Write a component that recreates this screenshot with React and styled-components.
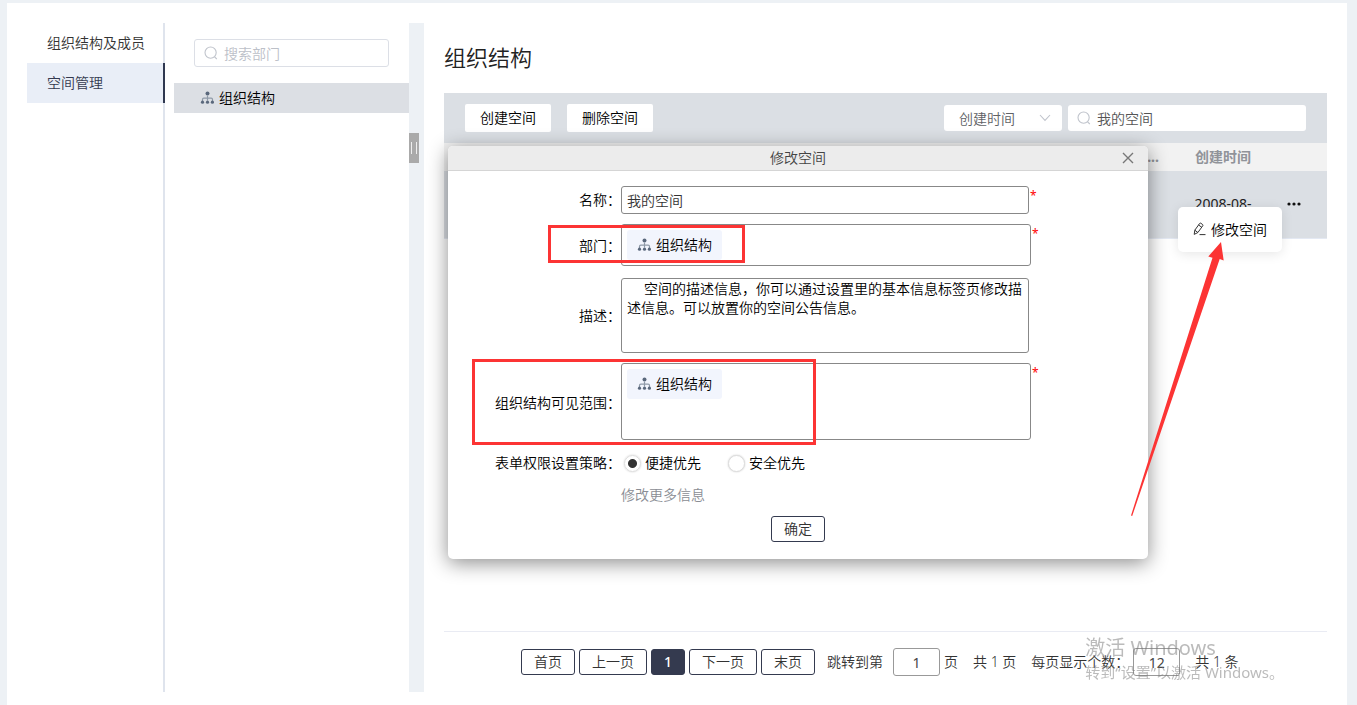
import styled, { createGlobalStyle } from "styled-components";

const GlobalStyle = createGlobalStyle`
  * {
    box-sizing: border-box;
  }

  body {
    margin: 0;
    background: #edf1f5;
    color: #333;
    font-size: 14px;
    line-height: 20px;
  }

  body, button, input, select, textarea {
    font-family: "Noto Sans", "Noto Sans CJK SC", sans-serif;
    font-weight: 350;
  }

  a {
    color: inherit;
    text-decoration: none;
  }
`;

const SitemapIcon = () => (
  <svg width="14" height="14" viewBox="0 0 14 14" fill="#5a687c" aria-hidden="true">
    <circle cx="7.5" cy="2.6" r="2" />
    <path
      d="M7.5 4.5v5M2.500 10V8.500q0-1.300 1.300-1.300h7.400q1.300 0 1.300 1.300V10"
      fill="none"
      stroke="#8f9aa8"
      strokeWidth="1.2"
    />
    <circle cx="2.5" cy="11.2" r="1.6" />
    <circle cx="7.5" cy="11.2" r="1.6" />
    <circle cx="12.400" cy="11.2" r="1.6" />
  </svg>
);

const SearchIcon = () => (
  <svg width="14" height="14" viewBox="0 0 14 14" fill="none" stroke="#c0c4cc" aria-hidden="true">
    <circle cx="6.6" cy="6.6" r="5.6" strokeWidth="1.1" />
    <path d="M10.6 10.8l2.2 2.2" strokeWidth="1.1" />
  </svg>
);

const ChevronIcon = () => (
  <svg width="12" height="8" viewBox="0 0 12 8" fill="none" stroke="#c0c4cc" aria-hidden="true">
    <path d="M1 1l5 5.4L11 1" strokeWidth="1.1" />
  </svg>
);

const CloseIcon = () => (
  <svg width="12" height="12" viewBox="0 0 12 12" stroke="#777" aria-hidden="true">
    <path d="M1 1l10 10M11 1L1 11" strokeWidth="1.4" />
  </svg>
);

const PencilIcon = () => (
  <svg width="13" height="14" viewBox="0 0 13 14" fill="none" stroke="#333" aria-hidden="true">
    <path d="M1.2 12.4l.6-4.2L6.7 1.4q.5-.6 1.2-.1l1.7 1.2q.7.5.2 1.2L4.9 10.5zM5.6 3l3.2 2.3M1.8 8.2l3.1 2.3M6.5 12.6h6" />
  </svg>
);

const MoreIcon = () => (
  <svg width="14" height="4" viewBox="0 0 14 4" fill="#111" aria-hidden="true">
    <circle cx="2" cy="2" r="1.6" />
    <circle cx="7" cy="2" r="1.6" />
    <circle cx="12" cy="2" r="1.6" />
  </svg>
);

const App = () => {
  return (
    <>
      <GlobalStyle />
      <Page>
        <Nav>
          <NavLink href="#members">组织结构及成员</NavLink>
          <NavLink href="#spaces" $active>
            空间管理
          </NavLink>
        </Nav>

        <Tree>
          <TreeSearch>
            <SearchIcon />
            <SearchInput type="text" aria-label="搜索部门" placeholder="搜索部门" />
          </TreeSearch>
          <TreeNode href="#root-dept">
            <SitemapIcon />
            组织结构
          </TreeNode>
        </Tree>
        <Splitter>
          <Handle />
        </Splitter>

        <Main>
          <Title>组织结构</Title>
          <Toolbar>
            <ToolButton type="button">创建空间</ToolButton>
            <ToolButton type="button">删除空间</ToolButton>
            <Filters>
              <SelectWrap>
                <Select aria-label="排序">
                  <option>创建时间</option>
                </Select>
                <ChevronIcon />
              </SelectWrap>
              <SpaceSearch>
                <SearchIcon />
                <SearchInput type="text" aria-label="搜索空间" defaultValue="我的空间" />
              </SpaceSearch>
            </Filters>
          </Toolbar>

          <Table>
            <thead>
              <tr>
                <Th $align="right">...</Th>
                <Th $width="128px">创建时间</Th>
                <Th $width="40px" />
              </tr>
            </thead>
            <tbody>
              <tr>
                <Td />
                <Td>2008-08-</Td>
                <Td>
                  <MoreButton type="button" aria-label="更多">
                    <MoreIcon />
                  </MoreButton>
                </Td>
              </tr>
            </tbody>
          </Table>

          <Pager>
            <Button type="button">首页</Button>
            <Button type="button">上一页</Button>
            <Button type="button" $current>
              1
            </Button>
            <Button type="button">下一页</Button>
            <Button type="button">末页</Button>
            <PagerInfo>
              <label htmlFor="jump">跳转到第</label>
              <PageInput id="jump" type="text" defaultValue="1" />
            </PagerInfo>
            <PagerText>页</PagerText>
            <PagerText $wide>共 1 页</PagerText>
            <PagerText as="label" htmlFor="size" $wide>
              每页显示个数：
            </PagerText>
            <PageInput id="size" type="text" defaultValue="12" />
            <PagerText $wide>共 1 条</PagerText>
          </Pager>

          <Popover type="button">
            <PencilIcon />
            修改空间
          </Popover>

          <Dialog role="dialog" aria-labelledby="dialog-title">
            <DialogHeader>
              <DialogTitle id="dialog-title">修改空间</DialogTitle>
              <CloseButton type="button" aria-label="关闭">
                <CloseIcon />
              </CloseButton>
            </DialogHeader>
            <Form>
              <Label htmlFor="name">名称：</Label>
              <Field>
                <TextInput id="name" type="text" defaultValue="我的空间" />
                <Required>*</Required>
              </Field>

              <Label as="span">部门：</Label>
              <Field>
                <TagBox $height="42px">
                  <Tag>
                    <SitemapIcon />
                    组织结构
                  </Tag>
                </TagBox>
                <Required>*</Required>
              </Field>

              <Label htmlFor="desc">描述：</Label>
              <Field>
                <TextArea
                  id="desc"
                  defaultValue="空间的描述信息，你可以通过设置里的基本信息标签页修改描述信息。可以放置你的空间公告信息。"
                />
              </Field>

              <Label as="span">组织结构可见范围：</Label>
              <Field>
                <TagBox $height="77px">
                  <Tag>
                    <SitemapIcon />
                    组织结构
                  </Tag>
                </TagBox>
                <Required>*</Required>
              </Field>

              <Label as="span">表单权限设置策略：</Label>
              <Radios>
                <RadioLabel>
                  <Radio type="radio" name="policy" defaultChecked />
                  便捷优先
                </RadioLabel>
                <RadioLabel>
                  <Radio type="radio" name="policy" />
                  安全优先
                </RadioLabel>
              </Radios>

              <MoreLink href="#more">修改更多信息</MoreLink>
            </Form>
            <DialogFooter>
              <Button type="submit">确定</Button>
            </DialogFooter>
            <Highlight $left="100px" $top="79px" $width="197px" $height="38px" />
            <Highlight $left="24px" $top="213px" $width="344px" $height="86px" />
          </Dialog>

          <Pointer viewBox="0 0 94 275" aria-hidden="true">
            <path d="M90 0l2.7 18.6-4-1.5L1.2 274 0 273.5 81.5 15.8l-4.2-1.3z" fill="#fc3434" />
          </Pointer>
        </Main>
      </Page>

      <Watermark>
        <WatermarkTitle>激活 Windows</WatermarkTitle>
        <WatermarkText>转到“设置”以激活 Windows。</WatermarkText>
      </Watermark>
    </>
  );
};

const Page = styled.div`
  display: flex;
  min-height: calc(100vh - 3px);
  margin: 3px 10px 0 7px;
  padding: 20px 20px 13px;
  background: #fff;
`;

const Nav = styled.nav`
  flex: 0 0 138px;
  min-width: 0;
  border-right: 2px solid #dfe4ed;
`;

const NavLink = styled.a`
  display: block;
  margin-right: -2px;
  padding-left: 20px;
  line-height: 40px;
  white-space: nowrap;
  color: ${(props) => (props.$active ? "#343a4f" : "#333")};
  background: ${(props) => (props.$active ? "#e9eef7" : "transparent")};
  border-right: 2px solid ${(props) => (props.$active ? "#2f3850" : "transparent")};
`;

const Tree = styled.aside`
  flex: 0 0 235px;
  min-width: 0;
  margin-left: 9px;
  padding-top: 16px;
`;

const SearchBox = styled.div`
  display: flex;
  align-items: center;
  gap: 6px;
  background: #fff;
  border-radius: 3px;
`;

const TreeSearch = styled(SearchBox)`
  height: 28px;
  margin: 0 20px 16px;
  padding: 0 9px;
  border: 1px solid #dcdfe6;
`;

const SearchInput = styled.input`
  flex: 1;
  min-width: 0;
  padding: 0;
  border: none;
  outline: 0;
  background: none;
  color: #555;
  font-size: 14px;

  &::placeholder {
    color: #bcc0c8;
  }
`;

const TreeNode = styled.a`
  display: flex;
  align-items: center;
  gap: 5px;
  height: 30px;
  padding-left: 26px;
  color: #000;
  background: #dcdfe4;
`;

const Splitter = styled.div`
  flex: 0 0 15px;
  padding-top: 110px;
  background: #edf1f5;
`;

const Handle = styled.div`
  display: flex;
  align-items: center;
  justify-content: center;
  width: 10px;
  height: 30px;
  background: #aaa;

  &::before {
    content: "";
    width: 4px;
    height: 12px;
    border: solid #eee;
    border-width: 0 1px;
  }
`;

const Main = styled.main`
  position: relative;
  display: flex;
  flex: 1;
  flex-direction: column;
  min-width: 0;
  margin-left: 20px;
`;

const Title = styled.h1`
  margin: 0;
  padding-bottom: 2px;
  color: #222;
  font-size: 22px;
  font-weight: 350;
  line-height: 68px;
`;

const Toolbar = styled.div`
  display: flex;
  align-items: center;
  gap: 16px;
  height: 50px;
  padding: 0 21px;
  background: #dbdfe4;
`;

const ToolButton = styled.button`
  height: 28px;
  padding: 0 15px 2px;
  border: none;
  border-radius: 2px;
  color: #000;
  background: #fff;
  font-size: 14px;
`;

const Filters = styled.div`
  display: flex;
  gap: 6px;
  margin-left: auto;
`;

const SelectWrap = styled.div`
  display: flex;
  align-items: center;
  width: 118px;
  height: 26px;
  padding: 0 11px 0 15px;
  border-radius: 3px;
  background: #fff;
`;

const Select = styled.select`
  flex: 1;
  padding: 0;
  appearance: none;
  border: none;
  outline: 0;
  color: #606266;
  background: none;
  font-size: 14px;
`;

const SpaceSearch = styled(SearchBox)`
  width: 238px;
  height: 26px;
  padding: 0 9px;
`;

const Table = styled.table`
  width: 100%;
  table-layout: fixed;
  border-collapse: collapse;
`;

const Th = styled.th`
  width: ${(props) => props.$width || "auto"};
  height: 28px;
  padding: 0;
  color: #909399;
  background: #f2f2f2;
  font-weight: 700;
  text-align: ${(props) => props.$align || "center"};
`;

const Td = styled.td`
  height: 67px;
  padding: 0;
  color: #222;
  background: #dbdfe4;
  border-bottom: 1px solid #e4e9f3;
  text-align: center;
  font-weight: 400;

  &:last-child {
    text-align: left;
  }
`;

const MoreButton = styled.button`
  display: flex;
  padding: 0;
  border: none;
  background: none;
`;

const Pager = styled.footer`
  display: flex;
  align-items: center;
  gap: 4px;
  height: 61px;
  margin-top: auto;
  padding-left: 77px;
  white-space: nowrap;
  border-top: 1px solid #e9ebf3;
`;

const Button = styled.button`
  height: 26px;
  padding: 0 12px 2px;
  border: 1px solid #343a4f;
  border-radius: 3px;
  color: ${(props) => (props.$current ? "#fff" : "#333")};
  background: ${(props) => (props.$current ? "#343a4f" : "#fff")};
  font-size: 14px;
  font-weight: ${(props) => (props.$current ? 500 : 350)};
`;

const PagerInfo = styled.span`
  display: flex;
  align-items: center;
  gap: 10px;
  margin-left: 8px;
`;

const PagerText = styled.span`
  margin-left: ${(props) => (props.$wide ? "11px" : "0")};
`;

const PageInput = styled.input`
  width: 47px;
  height: 28px;
  padding: 0;
  border: 1px solid #999;
  border-radius: 3px;
  outline: 0;
  color: #444;
  text-align: center;
  font-size: 14px;
  font-weight: 400;
`;

const Popover = styled.button`
  position: absolute;
  top: 184px;
  right: 45px;
  display: flex;
  align-items: center;
  gap: 5px;
  height: 45px;
  padding: 0 15px 2px;
  border: none;
  border-radius: 5px;
  color: #000;
  background: #fff;
  box-shadow: 0 2px 12px rgba(0, 0, 0, 0.1);
  font-size: 14px;
`;

const Dialog = styled.section`
  position: absolute;
  top: 123px;
  left: 4px;
  width: 700px;
  padding-bottom: 17px;
  border-radius: 5px;
  background: #fff;
  box-shadow: 0 4px 20px rgba(0, 0, 0, 0.45);
`;

const DialogHeader = styled.header`
  display: flex;
  align-items: center;
  height: 25px;
  padding: 0 14px 0 26px;
  border-bottom: 1px solid #d5d5d5;
  border-radius: 5px 5px 0 0;
  background: #ececec;
`;

const DialogTitle = styled.h2`
  flex: 1;
  margin: 0;
  color: #444;
  text-align: center;
  font-size: 14px;
  font-weight: 350;
`;

const CloseButton = styled.button`
  display: flex;
  padding: 0;
  border: none;
  background: none;
`;

const Form = styled.div`
  display: grid;
  grid-template-columns: 173px 1fr;
  row-gap: 10px;
  align-items: center;
  padding-top: 15px;
  color: #000;
`;

const Label = styled.label`
  text-align: right;
`;

const Field = styled.div`
  display: flex;
  align-items: flex-start;
  gap: 1px;
`;

const Required = styled.span`
  color: #f00;
  font-size: 12px;
  font-weight: 400;
`;

const TextInput = styled.input`
  width: 408px;
  height: 28px;
  padding: 0 5px;
  border: 1px solid #888;
  border-radius: 3px;
  outline: 0;
  color: #333;
  font-size: 14px;
`;

const TagBox = styled.div`
  width: 410px;
  height: ${(props) => props.$height};
  margin-bottom: 2px;
  padding: 5px;
  border: 1px solid #888;
  border-radius: 3px;
`;

const Tag = styled.span`
  display: inline-flex;
  align-items: center;
  gap: 5px;
  height: 30px;
  padding: 0 10px;
  border-radius: 3px;
  background: #f2f5fd;
`;

const TextArea = styled.textarea`
  width: 408px;
  height: 75px;
  padding: 0 5px;
  border: 1px solid #888;
  border-radius: 3px;
  outline: 0;
  resize: none;
  color: #000;
  font-size: 14px;
  line-height: 19px;
  text-indent: 17px;
`;

const Radios = styled.div`
  display: flex;
  gap: 27px;
  height: 22px;
  padding-left: 3px;
`;

const RadioLabel = styled.label`
  display: flex;
  align-items: center;
  gap: 4px;
`;

const Radio = styled.input`
  width: 17px;
  height: 17px;
  margin: 0;
  appearance: none;
  border: 1px solid #ddd;
  border-radius: 50%;
  background: #fff;
  box-shadow: 0 0 2px rgba(0, 0, 0, 0.2);

  &:checked {
    background: radial-gradient(circle, #333 4px, #fff 5px);
  }
`;

const MoreLink = styled.a`
  grid-column: 2;
  color: #8a8d94;
  line-height: 22px;
`;

const DialogFooter = styled.div`
  display: flex;
  justify-content: center;
  margin-top: 10px;
`;

const Highlight = styled.div`
  position: absolute;
  top: ${(props) => props.$top};
  left: ${(props) => props.$left};
  width: ${(props) => props.$width};
  height: ${(props) => props.$height};
  border: 3px solid #fc3434;
  pointer-events: none;
`;

const Pointer = styled.svg`
  position: absolute;
  top: 219px;
  right: 102px;
  width: 94px;
  height: 275px;
  pointer-events: none;
`;

const Watermark = styled.div`
  position: fixed;
  right: 73px;
  bottom: 21px;
  color: rgba(120, 120, 120, 0.5);
  font-weight: 400;
  pointer-events: none;
`;

const WatermarkTitle = styled.div`
  font-size: 20px;
  line-height: 24px;
`;

const WatermarkText = styled.div`
  font-size: 15px;
  line-height: 24px;
`;

export default App;
